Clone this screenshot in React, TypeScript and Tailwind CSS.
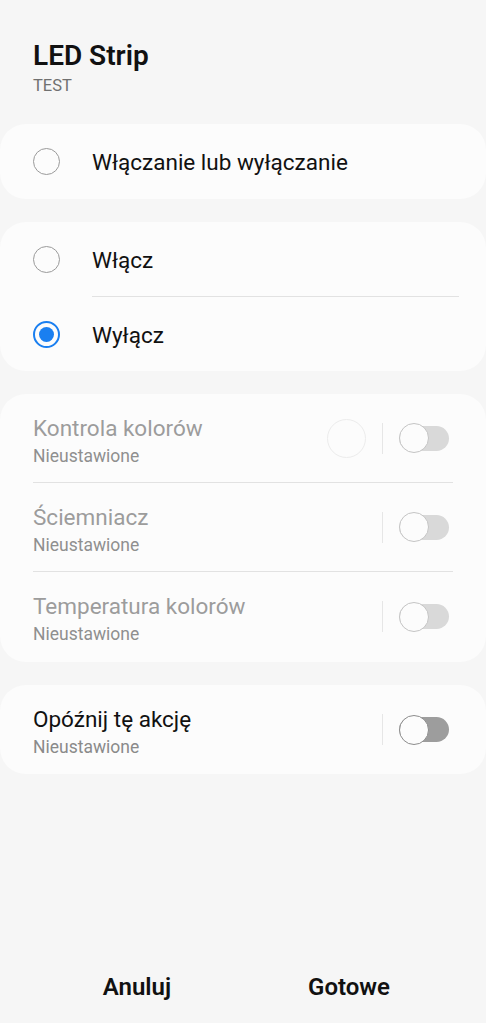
import React from "react";

function Radio({ checked }: { checked?: boolean }) {
  return checked ? (
    <div className="w-[27px] h-[27px] rounded-full border-2 border-[#1a7ff0] flex items-center justify-center shrink-0">
      <div className="w-[15px] h-[15px] rounded-full bg-[#1a7ff0]" />
    </div>
  ) : (
    <div className="w-[27px] h-[27px] rounded-full border-[1.5px] border-[#9a9a9a] shrink-0" />
  );
}

function Toggle({ enabled }: { enabled?: boolean }) {
  return (
    <div className="relative w-[50px] h-[30px] flex items-center">
      <div className={`w-[50px] h-[25px] rounded-full ${enabled ? "bg-[#9d9d9d]" : "bg-[#d9d9d9]"}`} />
      <div className={`absolute left-0 top-0 w-[30px] h-[30px] rounded-full bg-[#fcfcfc] border-[1.5px] ${enabled ? "border-[#8c8c8c]" : "border-[#c4c4c4]"}`} />
    </div>
  );
}

function SettingRow({
  title,
  enabled,
  circle,
  divider,
}: {
  title: string;
  enabled?: boolean;
  circle?: boolean;
  divider?: boolean;
}) {
  return (
    <div className={`mx-[33px] h-[89px] flex items-center ${divider ? "border-b border-[#e2e2e2]" : ""}`}>
      <div className="flex-1 flex flex-col pt-[4px]">
        <div className={`text-[22.5px] leading-[28px] ${enabled ? "text-[#111]" : "text-[#9c9c9c]"}`}>{title}</div>
        <div className={`text-[17.5px] leading-[22px] mt-[3px] ${enabled ? "text-[#8a8a8a]" : "text-[#8f8f8f]"}`}>Nieustawione</div>
      </div>
      {circle && <div className="w-[39px] h-[39px] rounded-full border border-[#ececec] mr-[16px]" />}
      <div className="w-px h-[31px] bg-[#e6e6e6] mr-[16px]" />
      <div className="mr-[4px]">
        <Toggle enabled={enabled} />
      </div>
    </div>
  );
}

export default function App() {
  return (
    <div
      className="w-[486px] h-[1023px] bg-[#f6f6f6] flex flex-col"
      style={{ fontFamily: "Roboto, 'Noto Sans', sans-serif" }}
    >
      <div className="px-[33px] pt-[39px] pb-[27px]">
        <div className="text-[28px] leading-[34px] font-semibold text-[#111]">LED Strip</div>
        <div className="text-[16.5px] leading-[22px] text-[#707070] mt-[2px]">TEST</div>
      </div>

      <div className="flex flex-col gap-[23px]">
        <div className="bg-[#fcfcfc] rounded-[26px] h-[75px] flex items-center px-[33px]">
          <Radio />
          <span className="ml-[32px] pt-[3px] text-[22.5px] text-[#111]">Włączanie lub wyłączanie</span>
        </div>

        <div className="bg-[#fcfcfc] rounded-[26px] flex flex-col">
          <div className="h-[74px] flex items-center pl-[33px]">
            <Radio />
            <span className="ml-[32px] pt-[3px] text-[22.5px] text-[#111]">Włącz</span>
          </div>
          <div className="ml-[92px] mr-[27px] h-px bg-[#e2e2e2]" />
          <div className="h-[74px] flex items-center pl-[33px]">
            <Radio checked />
            <span className="ml-[32px] pt-[3px] text-[22.5px] text-[#111]">Wyłącz</span>
          </div>
        </div>

        <div className="bg-[#fcfcfc] rounded-[26px] flex flex-col pb-[1px]">
          <SettingRow title="Kontrola kolorów" circle divider />
          <SettingRow title="Ściemniacz" divider />
          <SettingRow title="Temperatura kolorów" />
        </div>

        <div className="bg-[#fcfcfc] rounded-[26px] flex flex-col">
          <SettingRow title="Opóźnij tę akcję" enabled />
        </div>
      </div>

      <div className="mt-auto h-[72px] px-[31px] flex items-center">
        <div className="flex-1 text-center text-[24px] font-semibold text-[#111]">Anuluj</div>
        <div className="flex-1 text-center text-[24px] font-semibold text-[#111]">Gotowe</div>
      </div>
    </div>
  );
}
